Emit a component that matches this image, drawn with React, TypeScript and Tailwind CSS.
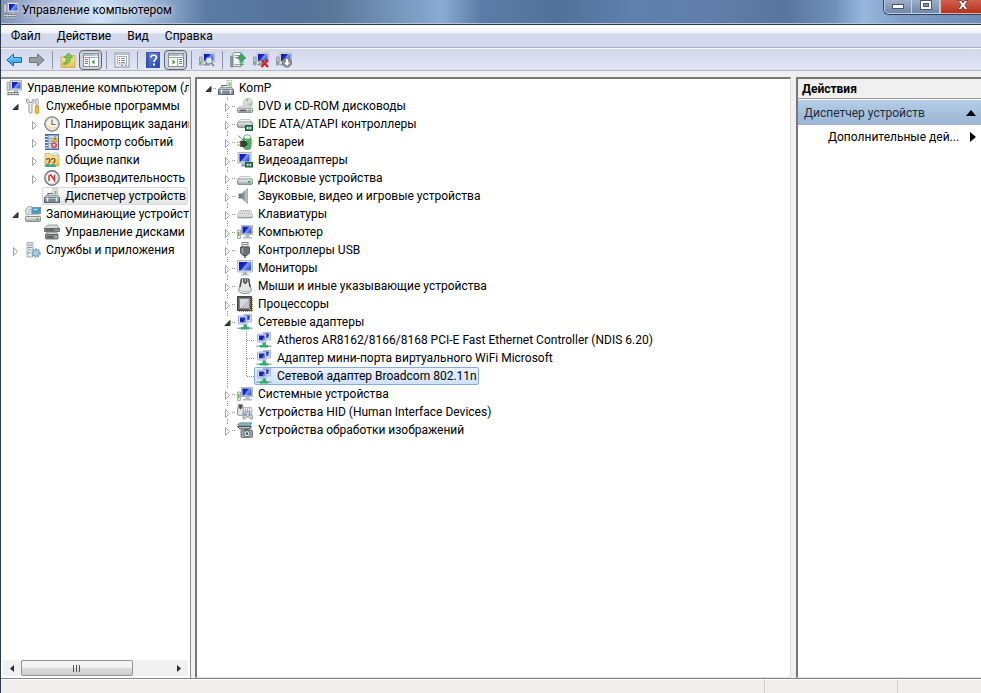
import { useState } from "react";
import type { ReactNode } from "react";
import clsx from "clsx";

type TIcon = () => ReactNode;

interface ITreeItem {
  label: string;
  icon: TIcon;
  level: number;
  state?: "open" | "closed";
  last?: boolean;
}

function Svg({ children }: { children: ReactNode }) {
  return (
    <svg width="16" height="16" viewBox="0 0 16 16" className="shrink-0" aria-hidden="true">
      {children}
    </svg>
  );
}

/* ---------- shared gradients ---------- */

function Gradients() {
  return (
    <svg width="0" height="0" className="absolute" aria-hidden="true">
      <defs>
        <linearGradient id="screen" x1="0" y1="0" x2="1" y2="0.6">
          <stop offset="0" stopColor="#0812a8" />
          <stop offset="0.5" stopColor="#1a2ccc" />
          <stop offset="0.6" stopColor="#7f9cf0" />
          <stop offset="1" stopColor="#3358dc" />
        </linearGradient>
        <linearGradient id="metal" x1="0" y1="0" x2="0" y2="1">
          <stop offset="0" stopColor="#f6f7f7" />
          <stop offset="1" stopColor="#9ba0a3" />
        </linearGradient>
        <linearGradient id="cone" x1="0" y1="0" x2="1" y2="0">
          <stop offset="0" stopColor="#717b82" />
          <stop offset="1" stopColor="#ced5da" />
        </linearGradient>
        <linearGradient id="blueArrow" x1="0" y1="0" x2="0" y2="1">
          <stop offset="0" stopColor="#8fdcfb" />
          <stop offset="1" stopColor="#1b8fdc" />
        </linearGradient>
        <linearGradient id="help" x1="0" y1="0" x2="1" y2="1">
          <stop offset="0" stopColor="#6f90e6" />
          <stop offset="1" stopColor="#1f3fae" />
        </linearGradient>
        <linearGradient id="folder" x1="0" y1="0" x2="0" y2="1">
          <stop offset="0" stopColor="#fbe9a4" />
          <stop offset="1" stopColor="#e8bf55" />
        </linearGradient>
      </defs>
    </svg>
  );
}

/* ---------- device icons ---------- */

const MonitorIcon = () => (
  <Svg>
    <rect x="0.500" y="0.500" width="15" height="11.500" rx="0.500" fill="#e2e5e6" stroke="#b4b9bb" />
    <rect x="2" y="2" width="12" height="8.500" fill="url(#screen)" />
    <path d="M6 12.500h4V14H6z" fill="#a3a9ae" />
    <path d="M4.500 14h7l1 1.500h-9z" fill="#b9bec3" />
  </Svg>
);

const ComputerIcon = () => (
  <Svg>
    <rect x="4.500" y="1.500" width="11" height="9" fill="#e0e4e8" stroke="#b0b6be" />
    <rect x="5.500" y="2.500" width="9" height="7" fill="url(#screen)" />
    <path d="M8.500 11h4v2h2.500v1.500H6V13h2.500z" fill="#b3b9c1" />
    <path d="M0.500 6h3v8.500h-3z" fill="#dfe3e5" stroke="#989fa5" strokeWidth="0.800" />
    <path d="M1 8h1.500v4H1z" fill="#58c83c" />
  </Svg>
);

const ManagementIcon = () => (
  <Svg>
    <rect x="4.500" y="0.500" width="11" height="9.500" fill="#dcdfe4" stroke="#a9afb8" />
    <rect x="6" y="2" width="8.500" height="6.500" fill="url(#screen)" />
    <path d="M1 2h2.500v8.500H1z" fill="#d3d7da" stroke="#8a9197" strokeWidth="0.700" />
    <path d="M8 10.500h4v1.500H8z" fill="#aeb4bb" />
    <rect x="1" y="12" width="12" height="3.500" fill="#d0d4d6" />
    <path d="M1.500 12.500h11M1.500 14.500h11" stroke="#5a6167" strokeDasharray="2 1" />
  </Svg>
);

const VideoIcon = () => (
  <Svg>
    <rect x="1" y="0.500" width="13" height="10.500" fill="#e0e4e8" stroke="#b0b6be" />
    <rect x="2.500" y="2" width="10" height="7.500" fill="url(#screen)" />
    <path d="M5 11.500h3V13h1v1.500H4V13h1z" fill="#9aa1ab" />
    <rect x="8.500" y="10.500" width="7" height="4.500" fill="#3a8f62" stroke="#1c5a3b" />
    <path d="M10 12h1.500v1.500H10zM12.500 12H14v1.500h-1.500z" fill="#e9efe6" />
  </Svg>
);

const ToolboxIcon = () => (
  <Svg>
    <path d="M9 0.500h4.500v7H9z" fill="#f1f4f0" stroke="#a9b2ad" strokeWidth="0.700" />
    <path d="M10.500 2.500h2V6.500h-2z" fill="#7fbb5c" />
    <path d="M4 7V5.500h5" fill="none" stroke="#5c676e" strokeWidth="1.200" />
    <path d="M2 7.500h12l1.500 2.500h-15z" fill="#c2cacf" stroke="#7d888e" strokeWidth="0.700" />
    <rect x="0.500" y="9.800" width="15" height="4.700" fill="#7b8b95" stroke="#5a6870" />
    <path d="M1 10.500h14" stroke="#b8c3ca" />
    <path d="M3.500 9.500v4M12.500 9.500v4" stroke="#eceff1" strokeWidth="1.400" />
  </Svg>
);

const DiscDriveIcon = () => (
  <Svg>
    <circle cx="11" cy="5" r="4.500" fill="#dfe3e1" stroke="#a7aeaa" strokeWidth="0.800" />
    <path d="M11 5 8.500 1.300H11zM11 5l4 .5-1.500 3z" fill="#8cc492" />
    <circle cx="11" cy="5" r="1.400" fill="#fff" stroke="#9ba49f" strokeWidth="0.600" />
    <path d="M3 8h10l2.500 2.500h-15z" fill="#f0f1f1" stroke="#b0b4b6" strokeWidth="0.700" />
    <rect x="0.500" y="10.200" width="15" height="4.300" rx="1" fill="url(#metal)" stroke="#8b9194" />
    <path d="M2.500 12.500h7" stroke="#4b5155" strokeWidth="1.400" />
    <path d="M11.500 12.500h2" stroke="#3aab34" strokeWidth="1.500" />
  </Svg>
);

const DriveIcon = () => (
  <Svg>
    <path d="M3 6.500h10l2.500 3h-15z" fill="#f3f4f4" stroke="#b0b4b6" strokeWidth="0.700" />
    <rect x="0.500" y="9" width="15" height="5.500" rx="1.500" fill="url(#metal)" stroke="#8b9194" />
    <path d="M11 11.800h2.500" stroke="#3aab34" strokeWidth="1.800" />
  </Svg>
);

const IdeIcon = () => (
  <Svg>
    <path d="M3 3.500h10l2.500 3h-15z" fill="#f3f4f4" stroke="#b0b4b6" strokeWidth="0.700" />
    <rect x="0.500" y="6" width="15" height="5.500" rx="1.500" fill="url(#metal)" stroke="#8b9194" />
    <rect x="8.500" y="9.500" width="7" height="5" fill="#3a8f62" stroke="#1c5a3b" />
    <path d="M10 11h1.500v2H10zM12.500 11H14v2h-1.500z" fill="#e9efe6" />
  </Svg>
);

const BatteryIcon = () => (
  <Svg>
    <rect x="6.500" y="1" width="7.500" height="14.500" rx="3" fill="#46b34e" stroke="#5c8a62" strokeWidth="0.800" />
    <ellipse cx="10.300" cy="3" rx="3.500" ry="2" fill="#f1f4f1" stroke="#8f9c92" strokeWidth="0.600" />
    <path d="M14 5.500c1.500 0 1.500 4 0 5" fill="none" stroke="#9aa79d" />
    <path d="M8.500 6v7" stroke="#b9efb8" strokeWidth="1.400" />
    <path d="M1 1.500c1.500 2 3 2 5 4.500" fill="none" stroke="#4a7d54" />
    <path d="M3.500 7h3.500c4 0 4 5.500 0 5.500H3.500z" fill="#3b3e40" stroke="#17191a" strokeWidth="0.600" />
    <path d="M0 8.200h3.500M0 11.200h3.500" stroke="#caa83c" strokeWidth="1.300" />
  </Svg>
);

const SoundIcon = () => (
  <Svg>
    <path d="M1.500 5.500h3.500v5H1.500z" fill="#727b81" />
    <path d="M5 5.500 10.500 0.500v15L5 10.500z" fill="url(#cone)" stroke="#8d959b" strokeWidth="0.600" />
    <path d="M10.500 1v14" stroke="#a5adb3" />
  </Svg>
);

const KeyboardIcon = () => (
  <Svg>
    <path d="M3 4.500h10.500l2 5v1.500l-1 1h-13l-1-1V9.500z" fill="#eceef0" stroke="#a9afb5" strokeWidth="0.800" />
    <path d="M3.500 6h9.500M3 7.500h10.500M2.500 9h12" stroke="#9ea5ac" strokeDasharray="1 1" />
    <path d="M0.700 11.300h14.600" stroke="#858c93" />
  </Svg>
);

const UsbIcon = () => (
  <Svg>
    <rect x="5" y="0.500" width="6" height="4.500" fill="#e3e5e7" stroke="#83888c" />
    <path d="M6.500 2.500h1M8.500 2.500h1" stroke="#44484b" />
    <path d="M3.500 5h9v6l-2.500 2.500H6L3.500 11z" fill="#6b7176" stroke="#474c50" strokeWidth="0.800" />
    <path d="M5.500 6v5" stroke="#a7adb1" strokeWidth="1.200" />
    <path d="M8 13v3" stroke="#4a4f53" strokeWidth="1.500" />
  </Svg>
);

const MouseIcon = () => (
  <Svg>
    <path d="M4.500 0.500h7.200l.8 5 1.700 5.500c.6 3-2 4.500-6.200 4.500S1.200 14 1.800 11L3.700 5.500z" fill="#e4e6e8" stroke="#6e7479" strokeWidth="0.800" />
    <path d="M4.500 1 3 9M11.700 1 13 9" stroke="#4a4f53" strokeWidth="1.500" />
    <path d="M6 1h4.500v3L8.200 6.500 6 4z" fill="#4d5257" />
    <path d="M8.200 1v3" stroke="#d7dadc" />
    <path d="M4 12c1 2 7 2 8 0" fill="none" stroke="#b2b8bc" />
  </Svg>
);

const CpuIcon = () => (
  <Svg>
    <path d="M2 15.500h13M15.500 2v13" stroke="#b38b3c" strokeDasharray="1 1" />
    <rect x="0.500" y="0.500" width="14" height="14" fill="#5a5b5b" stroke="#454646" />
    <rect x="2.500" y="2.500" width="10" height="10" fill="#c3c5c5" stroke="#858787" />
    <path d="M3 3h9l-9 9z" fill="#d9dbdb" />
    <path d="M12 13.500h2" stroke="#e07b25" strokeWidth="1.400" />
  </Svg>
);

const NetworkIcon = () => (
  <Svg>
    <rect x="7" y="0.500" width="7.500" height="7.500" fill="#d7def4" stroke="#a3b0d4" strokeWidth="0.800" />
    <rect x="8.500" y="1.500" width="4.500" height="4.500" fill="#2138c8" />
    <path d="M13 1.500v4.500h-1.500z" fill="#7f9cf0" />
    <rect x="1.500" y="2" width="8.500" height="8" rx="0.500" fill="#dde4f7" stroke="#93a1c9" strokeWidth="0.800" />
    <rect x="3" y="3.500" width="5.500" height="4.800" fill="#1426b4" />
    <path d="M8.500 3.500v4.800H6.500z" fill="#6c8bec" />
    <path d="M6.500 10.500h3.500V13h2v2.500h-8V13h2.500z" fill="#2fae6e" />
    <path d="M0.500 14.200h3.500M12 14.200h3.500" stroke="#93aaa0" strokeWidth="1.600" />
  </Svg>
);

const HidIcon = () => (
  <Svg>
    <path d="M1.500 0.500h4l.8 5v4.500c0 2-5.800 2-5.800 0V5.500z" fill="#e2e5e7" stroke="#6e7479" strokeWidth="0.800" />
    <path d="M2 1h3v3L3.500 5.500 2 4z" fill="#4d5257" />
    <path d="M6.500 3.500h8l1 4.500h-9z" fill="#eceef0" stroke="#989fa5" strokeWidth="0.700" />
    <path d="M8 5h6M8 6.700h6" stroke="#868c92" strokeDasharray="1 1" />
    <path d="M6.500 9.500c2-2 6-2 8 0l1.200 5c-1 2-2.700 0-3.700-1.500H9.500C8.500 14.500 7 16 6 14.500z" fill="#cfd5db" stroke="#737c84" strokeWidth="0.800" />
    <path d="M7.500 10.800h2" stroke="#33383c" />
    <circle cx="12.500" cy="10.700" r="1" fill="#3b8be0" />
  </Svg>
);

const ImagingIcon = () => (
  <Svg>
    <path d="M0.500 2.500 3 0.800h12l-1.500 2.700H1.500z" fill="#86b3bf" stroke="#5d7f89" strokeWidth="0.700" />
    <path d="M0.500 4.500h14L13 7H3z" fill="#b7bec2" stroke="#3f484d" strokeWidth="0.900" />
    <rect x="4" y="8" width="11.500" height="7.500" rx="1" fill="#9fa7ac" stroke="#596167" strokeWidth="0.800" />
    <path d="M7.500 7h4v1h-4z" fill="#4e565c" />
    <circle cx="10" cy="11.700" r="3" fill="#f1f5f7" stroke="#4d565b" strokeWidth="0.800" />
    <circle cx="10" cy="11.700" r="1.400" fill="#31627e" />
  </Svg>
);

/* ---------- console icons ---------- */

const ToolsIcon = () => (
  <Svg>
    <path d="M1.500 1v3.500L4 6.500V14c0 1.800 3 1.800 3 0V6.500L9 4.500V1L7 2.500v2H4v-2z" fill="#eceeef" stroke="#7f868b" strokeWidth="0.800" />
    <path d="M11 1h2l.5 3-.7 3.500h-1.600L10.500 4z" fill="#e1e4e6" stroke="#91979b" strokeWidth="0.700" />
    <path d="M10.300 8h3.400v6.500c0 1.500-3.400 1.500-3.400 0z" fill="#f8c02d" stroke="#bd861b" strokeWidth="0.800" />
  </Svg>
);

const ClockIcon = () => (
  <Svg>
    <circle cx="8" cy="8" r="7.300" fill="#b5b9bc" stroke="#777c80" />
    <circle cx="8" cy="8" r="5.700" fill="#fcf3de" stroke="#e8e4d8" />
    <path d="M8 3.500V8.500h3.500" fill="none" stroke="#4b79b8" strokeWidth="1.200" />
    <path d="M3.500 9c2 3.500 6 4 8.500 1.500" fill="none" stroke="#f3cf8d" />
  </Svg>
);

const EventsIcon = () => (
  <Svg>
    <rect x="1.500" y="0.500" width="13" height="15" fill="#5b7fb8" stroke="#47689f" />
    <rect x="4.500" y="1.500" width="9.500" height="13" fill="#cfd9e8" />
    <path d="M1 2.500h3M1 5.500h3M1 8.500h3M1 11.500h3M1 14h3" stroke="#dbe3ef" />
    <path d="M5.500 4.500h3M5.500 7h2.500M5.500 9.500h2" stroke="#8291ad" />
    <path d="M11 2l3 5.500H8z" fill="#f4cc2e" stroke="#a98a18" strokeWidth="0.600" />
    <path d="M11 4v2" stroke="#4a3d10" />
    <circle cx="10" cy="11.300" r="3" fill="#dd4646" />
    <path d="M8.800 10.100l2.400 2.400M11.200 10.100l-2.400 2.400" stroke="#fff" />
  </Svg>
);

const SharedFolderIcon = () => (
  <Svg>
    <path d="M1 3V1.500h5L7.500 3H15v11H1z" fill="url(#folder)" stroke="#cfa94d" strokeWidth="0.800" />
    <path d="M9 1h5v2.500H9z" fill="#eef6fb" stroke="#9cb9c9" strokeWidth="0.600" />
    <path d="M2.500 8c0-2 3.500-2 3.500 0s-1 2-1.500 3M7.500 8c0-2 3.500-2 3.500 0s-1 2-1.500 3" fill="none" stroke="#5e4a30" strokeWidth="1.200" />
    <path d="M1 15c0-4.500 6-4.500 6 0z" fill="#3a9fae" />
    <path d="M6.500 15c0-4.500 5.500-4.500 5.500 0z" fill="#42a888" />
  </Svg>
);

const PerformanceIcon = () => (
  <Svg>
    <circle cx="8" cy="8" r="7.200" fill="#fff" stroke="#6d7276" strokeWidth="1.400" />
    <circle cx="8" cy="8" r="5.400" fill="#fff" stroke="#c3c6c9" strokeWidth="0.700" />
    <path d="M5 11V6l2-1 3.500 5.500V5" fill="none" stroke="#d02f2f" strokeWidth="1.500" />
  </Svg>
);

const StorageIcon = () => (
  <Svg>
    <circle cx="5" cy="5" r="4.500" fill="#dde6e6" stroke="#9aa5a7" />
    <circle cx="5" cy="5" r="1.400" fill="#fff" stroke="#8d999b" strokeWidth="0.600" />
    <rect x="7" y="1.500" width="8.500" height="6" fill="#2f9fd4" stroke="#7e929c" />
    <path d="M8.500 3.500h4" stroke="#bfe8f8" strokeWidth="1.300" />
    <path d="M1.500 8.500h12.500l1.500 2h-15z" fill="#f3f4f4" stroke="#999fa2" strokeWidth="0.600" />
    <rect x="0.500" y="10.500" width="15" height="5" rx="1" fill="url(#metal)" stroke="#858b8e" />
    <path d="M11.500 13h2" stroke="#3aab34" strokeWidth="1.600" />
  </Svg>
);

const DisksIcon = () => (
  <Svg>
    <path d="M3.500 1h9.500l2.500 3.500H0.500z" fill="#d9dada" stroke="#838586" strokeWidth="0.800" />
    <rect x="0.500" y="4.500" width="15" height="3" fill="#8f9293" stroke="#5a5d5e" strokeWidth="0.800" />
    <path d="M3 8h9l2 2.500H1.500z" fill="#cfd0d0" stroke="#77797a" strokeWidth="0.800" />
    <rect x="1.500" y="10.500" width="12.500" height="4.500" rx="0.500" fill="#85888a" stroke="#5b5e5f" strokeWidth="0.800" />
    <path d="M2 6h8M3 13h6" stroke="#3c3f40" />
    <path d="M11 13h2" stroke="#dfe1e1" />
  </Svg>
);

const ServicesIcon = () => (
  <Svg>
    <path d="M2 0.500h6v14.500H2z" fill="#e6eaed" stroke="#93a0a9" strokeWidth="0.800" />
    <path d="M3 3h4M3 5.500h4M3 8h3" stroke="#8a97a1" />
    <path d="M3 11h1.500" stroke="#3aab34" strokeWidth="1.400" />
    <circle cx="11" cy="11" r="3.800" fill="#a8c8e6" stroke="#6f9cc6" strokeWidth="1.800" strokeDasharray="1.600 1.200" />
    <circle cx="11" cy="11" r="3" fill="#bdd7ee" stroke="#6f9cc6" strokeWidth="0.700" />
    <circle cx="11" cy="11" r="1.200" fill="#fff" stroke="#5f8fbc" strokeWidth="0.600" />
  </Svg>
);

/* ---------- toolbar icons ---------- */

const BackIcon = () => (
  <Svg>
    <path d="M0.800 8 7.500 2v3.500h8v5h-8V14z" fill="url(#blueArrow)" stroke="#1d69a6" />
  </Svg>
);

const ForwardIcon = () => (
  <Svg>
    <path d="M15.200 8 8.500 2v3.500h-8v5h8V14z" fill="#9b9c9f" stroke="#737477" />
  </Svg>
);

const FolderUpIcon = () => (
  <Svg>
    <path d="M1 5h5.500l1-1.500H15v12H1z" fill="url(#folder)" stroke="#cfa94d" strokeWidth="0.800" />
    <path d="M3 12c3-1 3.500-4 3.500-6.500H4L8.500 1l4.500 4.500h-2.500C10.500 10 8 13 3 12z" fill="#7ccc4a" stroke="#4a9a2c" strokeWidth="0.700" />
  </Svg>
);

const PaneShape = () => (
  <>
    <rect x="0.500" y="1.500" width="15" height="13" fill="#fdfdfd" stroke="#87919d" />
    <path d="M1 3h14" stroke="#98a3b1" strokeWidth="1.500" />
    <path d="M1 5.500h14" stroke="#98a3b1" />
    <path d="M11 3h1M13 3h1" stroke="#fff" />
  </>
);

const LeftPaneIcon = () => (
  <Svg>
    <PaneShape />
    <path d="M6.500 5.500v9" stroke="#98a3b1" />
    <path d="M2 7.500h3M2 9.500h3M2 11.500h3" stroke="#6b7f96" />
    <path d="M11.500 7.500v5L8.500 10z" fill="#3ea52c" />
  </Svg>
);

const RightPaneIcon = () => (
  <Svg>
    <PaneShape />
    <path d="M9.500 5.500v9" stroke="#98a3b1" />
    <path d="M11 7.500h3M11 9.500h3M11 11.500h3" stroke="#6b7f96" />
    <path d="M4.500 7.500v5l3-2.500z" fill="#3ea52c" />
  </Svg>
);

const PropertiesIcon = () => (
  <Svg>
    <rect x="1" y="1" width="14" height="14" fill="#fafbfb" stroke="#8e959c" />
    <path d="M2 2.500h12" stroke="#b5bac0" />
    <rect x="3.500" y="4.500" width="9" height="7.500" fill="#fff" stroke="#a7afb7" />
    <path d="M5 6.500h1M5 8.500h1M5 10.500h1" stroke="#5a86b4" />
    <path d="M7 6.500h4M7 8.500h4M7 10.500h4" stroke="#8c9299" />
    <path d="M7 13.500h2M11 13.500h2" stroke="#6caed8" />
  </Svg>
);

const HelpIcon = () => (
  <Svg>
    <rect x="1.500" y="0.500" width="13" height="15" fill="url(#help)" stroke="#3a55ab" />
    <path d="M3 1v14" stroke="#203a92" />
    <path d="M6 5.500C6 2.500 11.500 2.500 11.500 5.500 11.500 7.500 9 7.500 9 10" fill="none" stroke="#fff" strokeWidth="1.700" />
    <path d="M8 11.500h2v2H8z" fill="#fff" />
  </Svg>
);

const SmallPcShape = () => (
  <>
    <rect x="4" y="1" width="11.500" height="9" fill="#dcdfe4" stroke="#b0b6be" strokeWidth="0.800" />
    <rect x="5" y="2" width="9.500" height="7" fill="url(#screen)" />
    <path d="M0.500 5h2.500v8H0.500z" fill="#c5cacd" stroke="#858d92" strokeWidth="0.800" />
    <path d="M1.800 9.500v2.500" stroke="#43a82c" />
    <path d="M6 10.500h4v1.500h1v1.500H4.500V12H6z" fill="#8d949b" />
  </>
);

const ScanIcon = () => (
  <Svg>
    <SmallPcShape />
    <circle cx="10" cy="8.500" r="3.200" fill="#d3ebfa" stroke="#8a98a4" />
    <path d="M12.300 11 15 14" stroke="#747c84" strokeWidth="1.800" />
  </Svg>
);

const UpdateIcon = () => (
  <Svg>
    <path d="M0.500 4h2v11h-2z" fill="#8f989c" stroke="#757d81" strokeWidth="0.600" />
    <path d="M3 1.500 5 .5h6v14H3z" fill="#f3f5f5" stroke="#737b7f" strokeWidth="0.800" />
    <path d="M4.500 3.500h5M4.500 5.500h4M4.500 12.500h5" stroke="#949ca0" />
    <path d="M11.500 1.500 16 6.500H13.500v2h-4v-2H7z" fill="#37a860" stroke="#1f8444" strokeWidth="0.600" />
    <path d="M9.500 10h4M9.500 12.500h4" stroke="#37a860" strokeWidth="1.500" />
  </Svg>
);

const RemoveIcon = () => (
  <Svg>
    <SmallPcShape />
    <path d="M8.500 8l6.500 7M15 8l-6.500 7" stroke="#d91e1e" strokeWidth="2.200" />
  </Svg>
);

const DisableIcon = () => (
  <Svg>
    <SmallPcShape />
    <circle cx="11" cy="10.500" r="4.700" fill="#8b8f93" stroke="#6e7377" strokeWidth="0.800" />
    <path d="M10 7h2v3.500h2l-3 3.500-3-3.500h2z" fill="#fff" />
  </Svg>
);

/* ---------- data ---------- */

const menuItems = ["Файл", "Действие", "Вид", "Справка"];

const toolbarGroups: { title: string; icon: TIcon; pressed?: boolean }[][] = [
  [
    { title: "Назад", icon: BackIcon },
    { title: "Вперед", icon: ForwardIcon },
  ],
  [
    { title: "Вверх", icon: FolderUpIcon },
    { title: "Дерево консоли", icon: LeftPaneIcon, pressed: true },
  ],
  [{ title: "Свойства", icon: PropertiesIcon }],
  [
    { title: "Справка", icon: HelpIcon },
    { title: "Панель действий", icon: RightPaneIcon, pressed: true },
  ],
  [{ title: "Обновить конфигурацию", icon: ScanIcon }],
  [
    { title: "Обновить драйверы", icon: UpdateIcon },
    { title: "Удалить", icon: RemoveIcon },
    { title: "Отключить", icon: DisableIcon },
  ],
];

const consoleTree: ITreeItem[] = [
  { label: "Управление компьютером (локальным)", icon: ManagementIcon, level: 0 },
  { label: "Служебные программы", icon: ToolsIcon, level: 1, state: "open" },
  { label: "Планировщик заданий", icon: ClockIcon, level: 2, state: "closed" },
  { label: "Просмотр событий", icon: EventsIcon, level: 2, state: "closed" },
  { label: "Общие папки", icon: SharedFolderIcon, level: 2, state: "closed" },
  { label: "Производительность", icon: PerformanceIcon, level: 2, state: "closed" },
  { label: "Диспетчер устройств", icon: ToolboxIcon, level: 2 },
  { label: "Запоминающие устройства", icon: StorageIcon, level: 1, state: "open" },
  { label: "Управление дисками", icon: DisksIcon, level: 2 },
  { label: "Службы и приложения", icon: ServicesIcon, level: 1, state: "closed" },
];

const deviceTree: ITreeItem[] = [
  { label: "KomP", icon: ToolboxIcon, level: 0, state: "open" },
  { label: "DVD и CD-ROM дисководы", icon: DiscDriveIcon, level: 1, state: "closed" },
  { label: "IDE ATA/ATAPI контроллеры", icon: IdeIcon, level: 1, state: "closed" },
  { label: "Батареи", icon: BatteryIcon, level: 1, state: "closed" },
  { label: "Видеоадаптеры", icon: VideoIcon, level: 1, state: "closed" },
  { label: "Дисковые устройства", icon: DriveIcon, level: 1, state: "closed" },
  { label: "Звуковые, видео и игровые устройства", icon: SoundIcon, level: 1, state: "closed" },
  { label: "Клавиатуры", icon: KeyboardIcon, level: 1, state: "closed" },
  { label: "Компьютер", icon: ComputerIcon, level: 1, state: "closed" },
  { label: "Контроллеры USB", icon: UsbIcon, level: 1, state: "closed" },
  { label: "Мониторы", icon: MonitorIcon, level: 1, state: "closed" },
  { label: "Мыши и иные указывающие устройства", icon: MouseIcon, level: 1, state: "closed" },
  { label: "Процессоры", icon: CpuIcon, level: 1, state: "closed" },
  { label: "Сетевые адаптеры", icon: NetworkIcon, level: 1, state: "open" },
  { label: "Atheros AR8162/8166/8168 PCI-E Fast Ethernet Controller (NDIS 6.20)", icon: NetworkIcon, level: 2 },
  { label: "Адаптер мини-порта виртуального WiFi Microsoft", icon: NetworkIcon, level: 2 },
  { label: "Сетевой адаптер Broadcom 802.11n", icon: NetworkIcon, level: 2, last: true },
  { label: "Системные устройства", icon: ComputerIcon, level: 1, state: "closed" },
  { label: "Устройства HID (Human Interface Devices)", icon: HidIcon, level: 1, state: "closed" },
  { label: "Устройства обработки изображений", icon: ImagingIcon, level: 1, state: "closed", last: true },
];

/* ---------- tree ---------- */

interface IBranchProps {
  state?: "open" | "closed";
  vertical?: "full" | "half";
  horizontal?: boolean;
}

// one indent step of the tree: dotted guides and the expand triangle
function Branch({ state, vertical, horizontal }: IBranchProps) {
  return (
    <svg width="19" height="18" viewBox="0 0 19 18" className="block shrink-0" aria-hidden="true">
      {vertical && (
        <path
          d={vertical === "full" ? "M9.500 0v18" : "M9.500 0v10"}
          stroke="#8f8f8f"
          strokeDasharray="1 1"
        />
      )}
      {horizontal && <path d="M10 9.500h8" stroke="#8f8f8f" strokeDasharray="1 1" />}
      {state && <path d="M5 4h9v11H5z" fill="#fff" />}
      {state === "closed" && <path d="M7.500 6.500v8l4-4z" fill="#fff" stroke="#a3a3a3" />}
      {state === "open" && <path d="M12 7.500v5H7z" fill="#404040" stroke="#262626" />}
    </svg>
  );
}

interface ITreeProps {
  items: ITreeItem[];
  label: string;
  initial: string;
  guides?: boolean;
}

function Tree({ items, label, initial, guides }: ITreeProps) {
  const [selected, setSelected] = useState(initial);

  return (
    <ul role="tree" aria-label={label}>
      {items.map((item) => {
        const Icon = item.icon;
        const active = item.label === selected;
        // a root without a triangle takes no indent of its own
        const hasBranch = item.level > 0 || item.state;
        const outer = guides ? item.level : item.level - 1;
        const vertical = item.level === 0 ? undefined : item.last ? "half" : "full";

        return (
          <li key={item.label} role="treeitem" aria-selected={active} className="flex h-[18px] items-center">
            {Array.from({ length: Math.max(outer, 0) }, (_, i) => (
              <Branch key={i} vertical={guides && i > 0 ? "full" : undefined} />
            ))}
            {hasBranch && (
              <Branch
                state={item.state}
                vertical={guides ? vertical : undefined}
                horizontal={guides}
              />
            )}
            <button
              type="button"
              onClick={() => setSelected(item.label)}
              className={clsx(
                "-ml-0.5 flex h-[18px] shrink-0 items-center gap-[5px] rounded-xs border px-px whitespace-nowrap",
                !active && "border-transparent",
                active && guides && "border-[#84acdd] bg-linear-to-b from-[#eaf2fd] to-[#cfe1f8]",
                active && !guides && "border-[#d9d9d9] bg-linear-to-b from-[#fafafa] to-[#e5e5e5]"
              )}
            >
              <Icon />
              <span>{item.label}</span>
            </button>
          </li>
        );
      })}
    </ul>
  );
}

/* ---------- window ---------- */

function TitleBar() {
  return (
    <header className="flex h-6 shrink-0 items-start justify-between border-b border-[#b4c4da] bg-[linear-gradient(90deg,#8092b8_0%,#a9b6d6_4%,#b5c9e4_7%,#cfe4f8_10%,#a9c2de_14%,#7f9bbf_18%,#5b7ba4_21%,#557399_30%,#5a7899_34%,#7594ba_40%,#8aabd2_45%,#5c7ca7_49%,#52719a_57%,#5f80ad_64%,#617faa_72%,#58759c_80%,#7090bb_85%,#98b7dc_88%,#7f9fc8_92%,#6c8cb5_100%)]">
      <div className="flex items-center gap-[3px] pt-px pl-0.5">
        <ManagementIcon />
        <h1 className="text-xs leading-[18px] text-black [text-shadow:0_0_6px_#ffffffb0,0_0_10px_#ffffff90]">
          Управление компьютером
        </h1>
      </div>
      <div className="flex h-[15px] rounded-bl-md border-b border-l border-[#2f3e55] text-white">
        <button type="button" aria-label="Свернуть" className="flex w-7 items-center justify-center rounded-bl-[5px] border-r border-b border-l border-[#c3d0e0] bg-linear-to-b from-[#9db0c8] to-[#6f89aa]">
          <svg width="12" height="6" viewBox="0 0 12 6" aria-hidden="true">
            <rect x="0.500" y="0.500" width="11" height="4" fill="#fff" stroke="#4c5666" />
          </svg>
        </button>
        <button type="button" aria-label="Развернуть" className="flex w-7 items-center justify-center border-r border-b border-[#c3d0e0] bg-linear-to-b from-[#9db0c8] to-[#6f89aa] pb-[3px]">
          <svg width="12" height="10" viewBox="0 0 12 10" aria-hidden="true">
            <rect x="0.500" y="0.500" width="11" height="9" fill="#fff" stroke="#4c5666" />
            <rect x="3.500" y="3.500" width="5" height="3" fill="#7d93b0" stroke="#4c5666" />
          </svg>
        </button>
        <button type="button" aria-label="Закрыть" className="flex w-[41px] items-center justify-center border-b border-l border-[#e2b5ae] bg-linear-to-b from-[#d2604f] to-[#b8301b] pb-[3px] pl-1">
          <svg width="12" height="10" viewBox="0 0 12 10" aria-hidden="true">
            <path d="M1 .5h3L6 3 8 .5h3L7.800 5 11 9.500H8L6 7 4 9.500H1L4.200 5z" fill="#fff" stroke="#5b3434" strokeWidth="0.800" />
          </svg>
        </button>
      </div>
    </header>
  );
}

function MenuBar() {
  return (
    <nav className="flex h-[23px] shrink-0 items-center border-b border-[#adb1c2] bg-[linear-gradient(#fff_0,#eef1f8_8px,#d3d9ec_9px,#d4daed_100%)] pl-0.5">
      {menuItems.map((item) => (
        <button key={item} type="button" className="px-2">
          {item}
        </button>
      ))}
    </nav>
  );
}

function Toolbar() {
  return (
    <div role="toolbar" className="flex h-[23px] shrink-0 items-center border-t border-b border-t-[#f7f8fc] border-b-[#b3b6c6] bg-linear-to-b from-[#d2d8eb] to-[#e2e7f6] pl-px">
      {toolbarGroups.map((group, index) => (
        <div key={index} className="flex items-center">
          {index > 0 && (
            <div className="flex w-2 justify-center">
              <div className="h-[18px] w-px bg-[#8f93a3]" />
            </div>
          )}
          {group.map(({ title, icon: Icon, pressed }) => (
            <button
              key={title}
              type="button"
              aria-label={title}
              aria-pressed={pressed}
              className={clsx(
                "flex h-5 w-[23px] items-center justify-center",
                pressed && "rounded border border-[#5f6470] bg-[#d0d4df] inset-shadow-2xs"
              )}
            >
              <Icon />
            </button>
          ))}
        </div>
      ))}
    </div>
  );
}

function HorizontalScrollbar() {
  return (
    <div className="flex h-4 shrink-0 items-stretch bg-[#f0f0f0]">
      <button type="button" aria-label="Прокрутить влево" className="flex w-[18px] items-center justify-center">
        <svg width="4" height="7" viewBox="0 0 4 7" aria-hidden="true">
          <path d="M4 0v7L0 3.500z" fill="#2b2b2b" />
        </svg>
      </button>
      <div className="flex flex-1">
        <div className="flex w-3/4 items-center justify-center gap-0.5 rounded-xs border border-[#959595] bg-linear-to-b from-[#f4f4f4] from-45% via-[#dcdcdc] via-50% to-[#cfcfcf]">
          <div className="h-[7px] w-px bg-[#555]" />
          <div className="h-[7px] w-px bg-[#555]" />
          <div className="h-[7px] w-px bg-[#555]" />
        </div>
      </div>
      <button type="button" aria-label="Прокрутить вправо" className="flex w-[18px] items-center justify-center">
        <svg width="4" height="7" viewBox="0 0 4 7" aria-hidden="true">
          <path d="M0 0v7l4-3.500z" fill="#2b2b2b" />
        </svg>
      </button>
    </div>
  );
}

function ActionsPane() {
  return (
    <aside className="flex w-[185px] shrink-0 flex-col border-t-2 border-b border-l-2 border-[#777] border-b-[#dedede] bg-white">
      <h2 className="border-b border-[#9a9a9a] bg-[#f0f0f0] pt-0.5 pl-1 text-xs leading-[17px] font-bold">Действия</h2>
      <button type="button" className="mt-px flex h-[25px] items-center justify-between bg-linear-to-b from-[#b5cde6] to-[#9ab5d3] pr-[5px] pl-1.5 text-[#1e2b3c]">
        <span>Диспетчер устройств</span>
        <svg width="10" height="6" viewBox="0 0 10 6" aria-hidden="true">
          <path d="M5 0l5 6H0z" fill="#000" />
        </svg>
      </button>
      <button type="button" className="flex h-6 items-center justify-between pr-[5px] pl-[30px]">
        <span>Дополнительные дей...</span>
        <svg width="6" height="10" viewBox="0 0 6 10" aria-hidden="true">
          <path d="M0 0l6 5-6 5z" fill="#000" />
        </svg>
      </button>
    </aside>
  );
}

export default function App() {
  return (
    <div className="flex h-screen flex-col overflow-hidden border-l border-[#2b3a4c] bg-[#f0f0f0] font-['Roboto','Noto_Sans',sans-serif] text-xs text-black">
      <Gradients />
      <TitleBar />
      <div className="h-px shrink-0 bg-[#2f3b4d]" />
      <MenuBar />
      <Toolbar />

      <main className="flex min-h-0 flex-1 pt-1.5">
        <section className="flex w-[190px] shrink-0 flex-col border-t-2 border-r border-[#8a8d91] bg-white">
          <div className="flex-1 overflow-hidden pr-px pl-[5px]">
            {/* rows start two pixels left of the text column, so only the right side may clip */}
            <div className="overflow-x-clip">
              <Tree items={consoleTree} label="Дерево консоли" initial="Диспетчер устройств" />
            </div>
          </div>
          <div className="px-0.5 pb-0.5">
            <HorizontalScrollbar />
          </div>
        </section>

        <section className="ml-1 min-w-0 flex-1 border-t-2 border-r border-b border-l-2 border-t-[#777] border-r-[#dedede] border-b-[#dedede] border-l-[#777] bg-white pl-0.5">
          <Tree items={deviceTree} label="Устройства" initial="Сетевой адаптер Broadcom 802.11n" guides />
        </section>

        <div className="w-[5px] shrink-0" />
        <ActionsPane />
      </main>

      <footer className="flex h-[15px] shrink-0 border-t border-[#858585] bg-[#f0edec]">
        <div className="flex-1 border-t border-r border-t-white border-r-[#d3d0cf]" />
        <div className="w-[133px] border-t border-r border-t-white border-r-[#d3d0cf]" />
        <div className="w-[83px] border-t border-t-white" />
      </footer>
    </div>
  );
}
